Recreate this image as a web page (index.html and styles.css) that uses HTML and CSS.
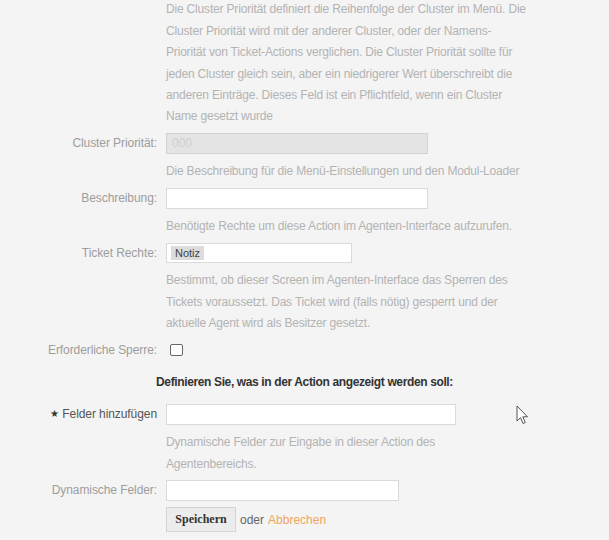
FILE: index.html
```html
<!DOCTYPE html>
<html lang="de">
<head>
<meta charset="utf-8">
<title>Action</title>
<link rel="stylesheet" href="styles.css">
</head>
<body>
<div class="form">
  <p class="desc first">Die Cluster Priorität definiert die Reihenfolge der Cluster im Menü. Die<br>Cluster Priorität wird mit der anderer Cluster, oder der Namens-<br>Priorität von Ticket-Actions verglichen. Die Cluster Priorität sollte für<br>jeden Cluster gleich sein, aber ein niedrigerer Wert überschreibt die<br>anderen Einträge. Dieses Feld ist ein Pflichtfeld, wenn ein Cluster<br>Name gesetzt wurde</p>
  <div class="row">
    <label class="lbl">Cluster Priorität:</label>
    <div class="inp w262 disabled">000</div>
  </div>
  <p class="desc">Die Beschreibung für die Menü-Einstellungen und den Modul-Loader</p>
  <div class="row">
    <label class="lbl">Beschreibung:</label>
    <div class="inp w262"></div>
  </div>
  <p class="desc">Benötigte Rechte um diese Action im Agenten-Interface aufzurufen.</p>
  <div class="row short">
    <label class="lbl">Ticket Rechte:</label>
    <div class="inp w186 tags"><span class="tag">Notiz</span></div>
  </div>
  <p class="desc">Bestimmt, ob dieser Screen im Agenten-Interface das Sperren des<br>Tickets voraussetzt. Das Ticket wird (falls nötig) gesperrt und der<br>aktuelle Agent wird als Besitzer gesetzt.</p>
  <div class="row">
    <label class="lbl">Erforderliche Sperre:</label>
    <span class="check"></span>
  </div>
  <h3 class="heading">Definieren Sie, was in der Action angezeigt werden soll:</h3>
  <div class="row">
    <label class="lbl req"><span class="star">★</span> Felder hinzufügen</label>
    <div class="inp w290"></div>
  </div>
  <p class="desc">Dynamische Felder zur Eingabe in dieser Action des<br>Agentenbereichs.</p>
  <div class="row last">
    <label class="lbl">Dynamische Felder:</label>
    <div class="inp w233"></div>
  </div>
  <div class="actions">
    <button class="btn">Speichern</button>
    <span class="oder">oder</span>
    <a class="cancel" href="#">Abbrechen</a>
  </div>
</div>
<svg class="cursor" width="13" height="20" viewBox="0 0 13 20" xmlns="http://www.w3.org/2000/svg">
  <path d="M1 1 L1 16 L4.5 12.6 L7 18.5 L9.3 17.5 L6.8 11.8 L11.5 11.8 Z" fill="#fff" stroke="#555" stroke-width="1" stroke-linejoin="round"/>
</svg>
</body>
</html>
```
FILE: styles.css
```css
html, body {
  margin: 0;
  padding: 0;
}
body {
  background: #f4f4f4;
  font-family: "Liberation Sans", Arial, sans-serif;
  font-size: 12px;
  color: #999;
  position: relative;
  width: 609px;
  height: 540px;
  overflow: hidden;
}
.form {
  padding-top: 0;
}
.desc {
  margin: 0 0 5.3px 166px;
  line-height: 21.4px;
  color: #b3b3b3;
  white-space: nowrap;
  letter-spacing: -0.18px;
}
.desc.first {
  margin-top: -0.7px;
}
.row {
  display: flex;
  align-items: center;
  gap: 9px;
  height: 21px;
  margin-bottom: 7.3px;
}
.row.short {
  height: 20px;
}
.row.last {
  margin-bottom: 6px;
}
.lbl {
  width: 157px;
  flex: none;
  text-align: right;
  color: #9d9d9d;
  line-height: 21px;
  white-space: nowrap;
  letter-spacing: -0.08px;
}
.lbl.req {
  color: #555;
}
.star {
  font-size: 10px;
  color: #333;
  vertical-align: 1px;
}
.inp {
  box-sizing: border-box;
  height: 100%;
  border: 1px solid #dadada;
  background: #fff;
}
.w262 { width: 262px; }
.w186 { width: 186px; }
.w290 { width: 290px; }
.w233 { width: 233px; }
.inp.disabled {
  background: #e4e4e4;
  border-color: #d2d2d2;
  color: #cfcfcf;
  padding-left: 5px;
  line-height: 19px;
}
.inp.tags {
  display: flex;
  align-items: center;
  padding-left: 4px;
}
.tag {
  background: #dcdcdc;
  color: #444;
  font-size: 11px;
  line-height: 14px;
  padding: 0 4px;
}
.check {
  box-sizing: border-box;
  width: 12.5px;
  height: 12px;
  margin-left: 4px;
  border: 1px solid #666;
  border-radius: 2px;
  background: #fff;
}
.heading {
  margin: 11.3px 0 10.3px;
  text-align: center;
  font-size: 12px;
  font-weight: bold;
  color: #333;
  line-height: 21.4px;
  letter-spacing: -0.37px;
}
.actions {
  display: flex;
  align-items: center;
  gap: 4px;
  margin-left: 166px;
  height: 25px;
}
.btn {
  box-sizing: border-box;
  width: 70px;
  height: 25px;
  padding: 0;
  border: 1px solid #d4d4d4;
  background: #ececec;
  font-family: "Liberation Serif", "Times New Roman", serif;
  font-weight: bold;
  font-size: 12px;
  color: #333;
}
.oder {
  color: #666;
}
.cancel {
  color: #f3a45c;
  text-decoration: none;
}
.cursor {
  position: absolute;
  left: 516px;
  top: 405px;
}
```
